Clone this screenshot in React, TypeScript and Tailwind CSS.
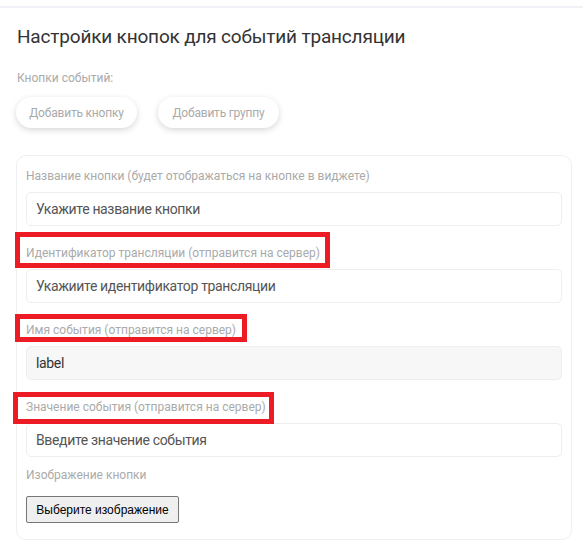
import React from 'react';

type Mark = { left: number; top: number; w: number; h: number };

function Field({
  label,
  value,
  placeholder,
  disabled,
  mark,
}: {
  label: string;
  value?: string;
  placeholder?: string;
  disabled?: boolean;
  mark?: Mark;
}) {
  return (
    <div className="mb-[18px]">
      <div className="relative mb-[7px] h-[18px] text-[12px] leading-[18px] text-[#aaaaaa]">
        {label}
        {mark && (
          <div
            className="absolute border-[5px] border-[#ed1c24] pointer-events-none"
            style={{ left: mark.left, top: mark.top, width: mark.w, height: mark.h }}
          />
        )}
      </div>
      <input
        readOnly
        disabled={disabled}
        value={value}
        placeholder={placeholder}
        className={`block w-full h-[34px] px-[9px] rounded-[5px] border border-[#eeeeee] text-[14px] tracking-[-0.35px] outline-none placeholder:text-[#555555] ${
          disabled ? 'bg-[#f7f7f7] text-[#333333]' : 'bg-white text-[#555555]'
        }`}
      />
    </div>
  );
}

export default function App() {
  return (
    <div className="min-h-[558px] bg-white font-['Roboto',sans-serif]">
      <div className="h-[6px]" />
      <div className="h-[2px] bg-[#f0f0f7]" />

      <div className="px-[16px]">
        <h1 className="pt-[15px] pl-[1px] text-[19px] leading-[28px] tracking-[-0.18px] text-[#333333] font-normal">
          Настройки кнопок для событий трансляции
        </h1>

        <p className="mt-[19px] pl-[1px] text-[12px] leading-[16px] text-[#aaaaaa]">Кнопки событий:</p>

        <div className="mt-[11px] flex gap-[21px]">
          <button className="h-[31px] w-[121px] rounded-full bg-white text-[12px] tracking-[-0.2px] text-[#aaaaaa] shadow-[0_2px_6px_rgba(0,0,0,0.16)]">
            Добавить кнопку
          </button>
          <button className="h-[31px] w-[121px] rounded-full bg-white text-[12px] tracking-[-0.2px] text-[#aaaaaa] shadow-[0_2px_6px_rgba(0,0,0,0.16)]">
            Добавить группу
          </button>
        </div>

        <div className="mt-[27px] w-[556px] rounded-[10px] border border-[#efefef] px-[9px] pt-[11px] pb-[16px]">
          <Field
            label="Название кнопки (будет отображаться на кнопке в виджете)"
            placeholder="Укажите название кнопки"
          />
          <Field
            label="Идентификатор трансляции (отправится на сервер)"
            placeholder="Укажиите идентификатор трансляции"
            mark={{ left: -11, top: -12, w: 315, h: 36 }}
          />
          <Field
            label="Имя события (отправится на сервер)"
            value="label"
            disabled
            mark={{ left: -11, top: -7, w: 232, h: 28 }}
          />
          <div className="-mb-[9px]">
            <Field
              label="Значение события (отправится на сервер)"
              placeholder="Введите значение события"
              mark={{ left: -13, top: -6, w: 261, h: 32 }}
            />
          </div>
          <div className="text-[12px] leading-[18px] text-[#aaaaaa]">Изображение кнопки</div>
          <button className="mt-[12px] h-[27px] w-[153px] rounded-[2px] border border-[#767676] bg-[#efefef] text-[12px] text-black font-['Liberation_Sans',sans-serif]">
            Выберите изображение
          </button>
        </div>
      </div>
    </div>
  );
}
